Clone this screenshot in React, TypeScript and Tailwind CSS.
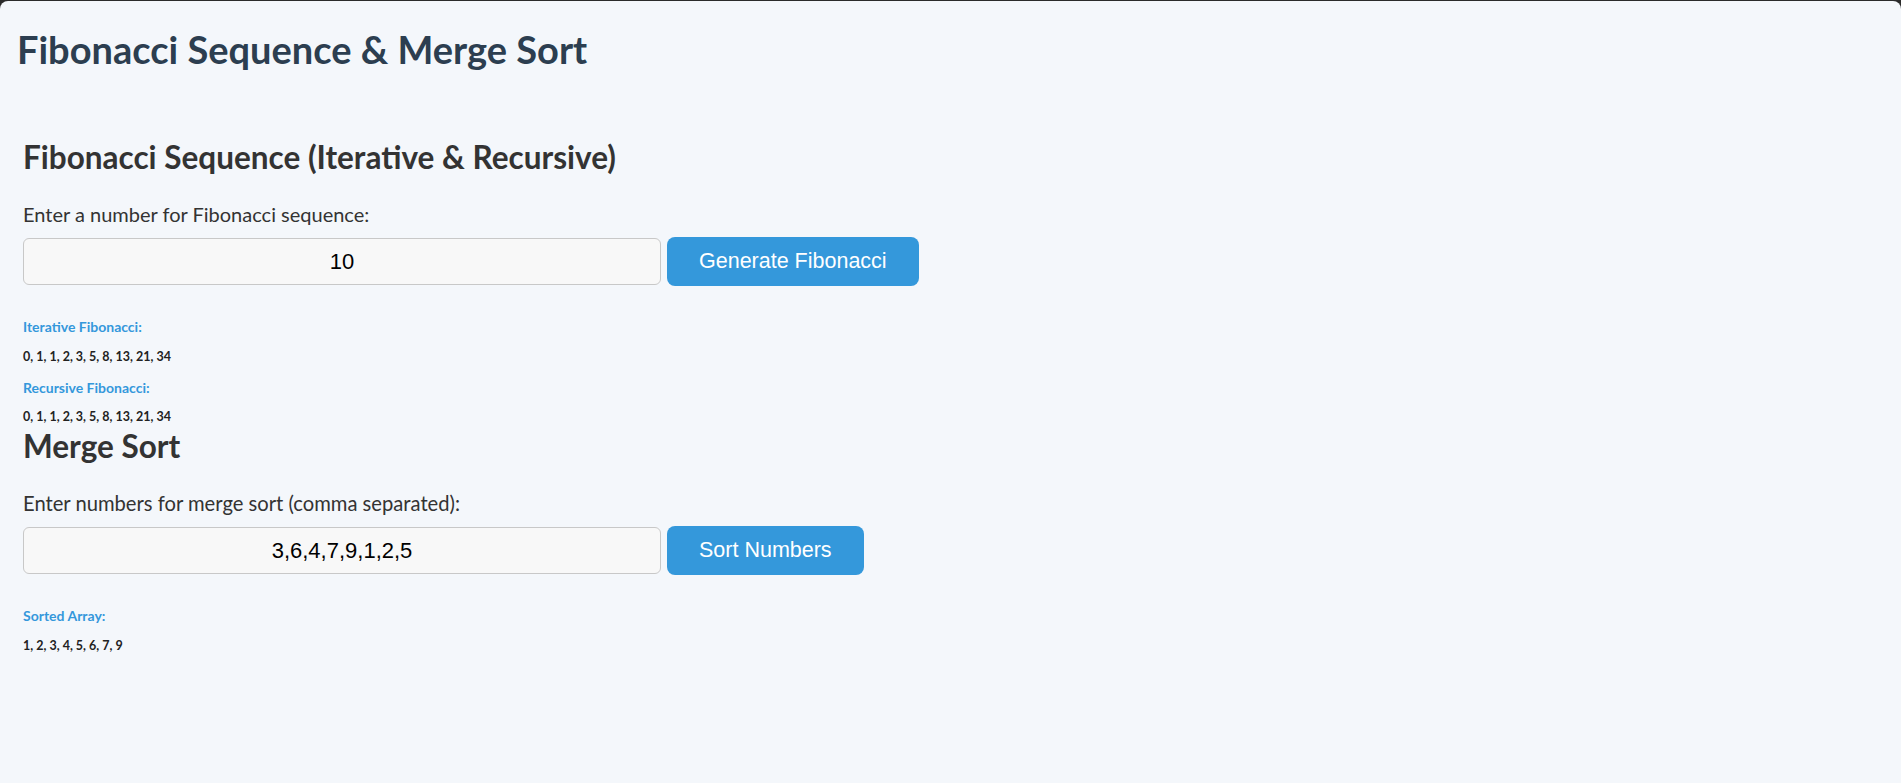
import React, { useState } from "react";

function fibIter(n: number): number[] {
  const out: number[] = [];
  let a = 0,
    b = 1;
  for (let i = 0; i < n; i++) {
    out.push(a);
    const t = a + b;
    a = b;
    b = t;
  }
  return out;
}

function fibRec(n: number): number {
  return n < 2 ? n : fibRec(n - 1) + fibRec(n - 2);
}

function mergeSort(arr: number[]): number[] {
  if (arr.length <= 1) return arr;
  const mid = Math.floor(arr.length / 2);
  const l = mergeSort(arr.slice(0, mid));
  const r = mergeSort(arr.slice(mid));
  const res: number[] = [];
  let i = 0,
    j = 0;
  while (i < l.length && j < r.length) res.push(l[i] <= r[j] ? l[i++] : r[j++]);
  return res.concat(l.slice(i), r.slice(j));
}

const FONT = { fontFamily: "Lato, 'Open Sans', 'Noto Sans', sans-serif" };
const ARIAL = { fontFamily: "'Liberation Sans', Arial, sans-serif" };

export default function App() {
  const [fibN] = useState("10");
  const [nums] = useState("3,6,4,7,9,1,2,5");
  const n = parseInt(fibN, 10);
  const iter = fibIter(n);
  const rec = Array.from({ length: n }, (_, i) => fibRec(i));
  const sorted = mergeSort(nums.split(",").map((s) => parseInt(s, 10)));

  return (
    <div className="min-h-screen bg-[#2b2b2b] pt-px">
      <div
        className="min-h-[782px] rounded-t-[8px] bg-[#f4f7fb] px-[17px] pt-[24px]"
        style={FONT}
      >
        <h1 className="m-0 text-[38px] font-bold leading-[48px] text-[#2c3e50]">
          Fibonacci Sequence &amp; Merge Sort
        </h1>

        <section className="mt-[66px] pl-[6px]">
          <h2 className="text-[31.5px] font-bold leading-[36px] text-[#333333]">
            Fibonacci Sequence (Iterative &amp; Recursive)
          </h2>
          <p className="mt-[27px] text-[20px] leading-[24px] text-[#333333]">
            Enter a number for Fibonacci sequence:
          </p>
          <div className="mt-[11px] flex items-center gap-[6px]">
            <input
              readOnly
              value={fibN}
              className="h-[47px] w-[638px] rounded-[6px] border border-[#c8c8c8] bg-[#f8f8f8] text-center text-[22px] text-black outline-none"
              style={ARIAL}
            />
            <button
              className="h-[49px] rounded-[8px] bg-[#3498db] px-[32px] text-[21.5px] text-white"
              style={ARIAL}
            >
              Generate Fibonacci
            </button>
          </div>
          <div className="mt-[32px]">
            <h4 className="text-[14px] font-bold leading-[17px] text-[#3498db]">
              Iterative Fibonacci:
            </h4>
            <p className="mt-[14px] text-[12.5px] font-bold leading-[15px] text-[#222222]">
              {iter.join(", ")}
            </p>
            <h4 className="mt-[15px] text-[14px] font-bold leading-[17px] text-[#3498db]">
              Recursive Fibonacci:
            </h4>
            <p className="mt-[13px] text-[12.5px] font-bold leading-[15px] text-[#222222]">
              {rec.join(", ")}
            </p>
          </div>
        </section>

        <section className="mt-[4px] pl-[6px]">
          <h2 className="text-[31.5px] font-bold leading-[36px] text-[#333333]">Merge Sort</h2>
          <p className="mt-[27px] text-[20.2px] leading-[24px] text-[#333333]">
            Enter numbers for merge sort (comma separated):
          </p>
          <div className="mt-[11px] flex items-center gap-[6px]">
            <input
              readOnly
              value={nums}
              className="h-[47px] w-[638px] rounded-[6px] border border-[#c8c8c8] bg-[#f8f8f8] text-center text-[22px] text-black outline-none"
              style={ARIAL}
            />
            <button
              className="h-[49px] rounded-[8px] bg-[#3498db] px-[32px] text-[21.5px] text-white"
              style={ARIAL}
            >
              Sort Numbers
            </button>
          </div>
          <div className="mt-[32px]">
            <h4 className="text-[14px] font-bold leading-[17px] text-[#3498db]">Sorted Array:</h4>
            <p className="mt-[14px] text-[12.5px] font-bold leading-[15px] text-[#222222]">
              {sorted.join(", ")}
            </p>
          </div>
        </section>
      </div>
    </div>
  );
}
